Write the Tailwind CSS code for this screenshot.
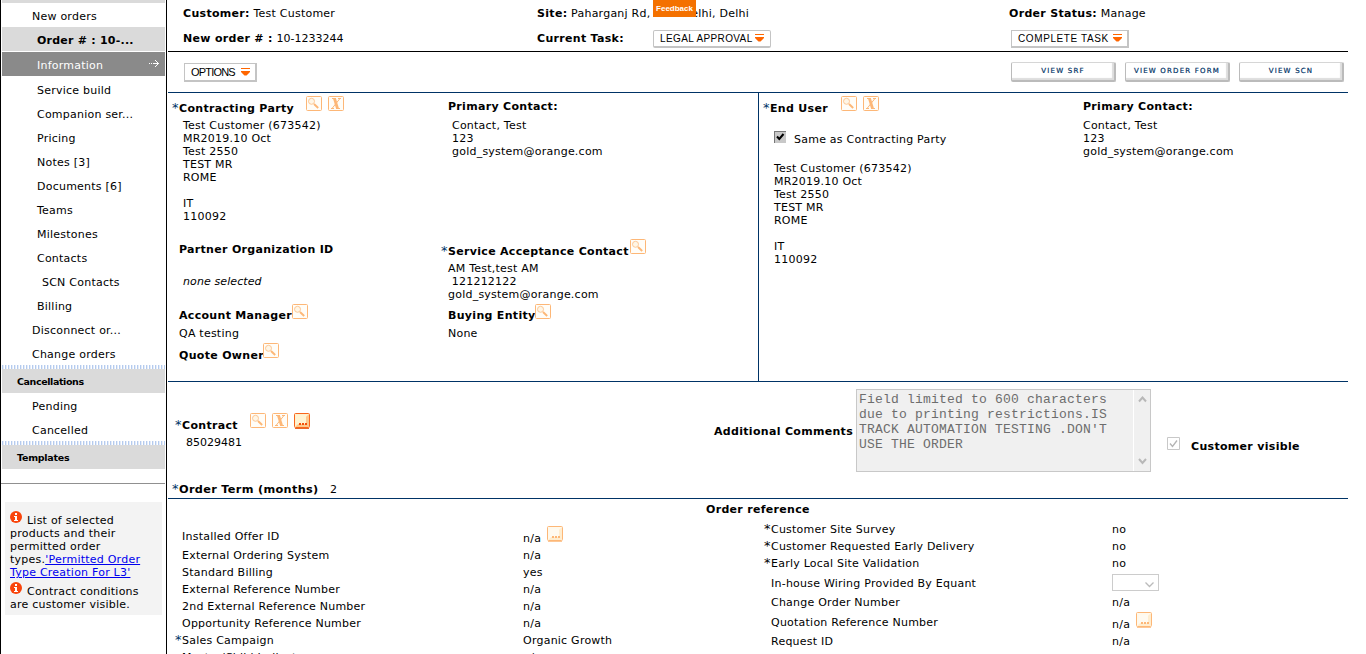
<!DOCTYPE html>
<html lang="en">
<head>
<meta charset="utf-8">
<title>Order information</title>
<script src="https://cdn.jsdelivr.net/npm/@tailwindcss/browser@4"></script>
</head>
<body class="h-[654px] w-[1366px] overflow-hidden bg-white font-['DejaVu_Sans',sans-serif] text-[11px] leading-[13px] tracking-[.23px] text-black [&_b]:whitespace-nowrap [&_b]:tracking-[.31px]">
<svg class="hidden">
  <symbol id="search" viewBox="0 0 16 15"><rect x=".5" y=".5" width="15" height="14" rx="1" fill="#fffdf8" stroke="#fdb777"/><circle cx="5.5" cy="5.3" r="3" fill="#fff6e6" stroke="#fdc896"/><path d="M8 8l4.2 4" stroke="#fdb777" stroke-width="1.9"/></symbol>
  <symbol id="clear" viewBox="0 0 16 15"><rect x=".5" y=".5" width="15" height="14" rx="1" fill="#fffdf8" stroke="#fdb777"/><path d="M4 2.500h4M10 2.500h3M3 12.500h3M8 12.500h4M12 2.500L4 12.500" stroke="#fdb777" fill="none"/><path d="M6.500 2.500L9.500 12.500" stroke="#fdb777" stroke-width="2.800"/></symbol>
  <symbol id="more" viewBox="0 0 16 16"><rect x=".5" y=".5" width="15" height="14" rx="1" fill="#fff9ec" stroke="#fdb777"/><path d="M15 1v13H1z" fill="#ffedcf"/><path d="M3 3h9v8H3z" fill="#fffaf0"/><path d="M1 15.500h14" stroke="#fdc896"/><path d="M5 10h2v2H5zM8 10h2v2H8zM11 10h2v2h-2z" fill="#fdb777"/></symbol>
  <symbol id="more-on" viewBox="0 0 16 16"><rect x=".5" y=".5" width="15" height="14" rx="1" fill="#fff0cc" stroke="#f9661b"/><path d="M15 1v13H1z" fill="#fdc98e"/><path d="M2 2h10v9H2z" fill="#fff3d2"/><path d="M1 15.500h14" stroke="#e8682a"/><path d="M5 10h2v2H5zM8 10h2v2H8zM11 10h2v2h-2z" fill="#f4500a"/></symbol>
  <symbol id="drop" viewBox="0 0 9 8"><path d="M0 0h9v1H0zM0 3h9v1L5.500 7.500h-2L0 4z" fill="#f60"/></symbol>
  <symbol id="info" viewBox="0 0 12 12"><circle cx="6" cy="6" r="6" fill="#f9440b"/><path d="M5 2h2v2H5zM4 5h3v4h1v1H4V9h1V6H4z" fill="#fff"/></symbol>
</svg>
<div class="flex h-full">
  <nav class="flex h-full w-[167px] shrink-0 flex-col border-x border-black pl-px">
    <div class="h-[3px] w-[163px] bg-[#dadada]"></div>
    <div class="h-6 pl-[30px] leading-[27px]">New orders</div>
    <div class="h-6 w-[163px] bg-[#dadada] pl-[35px] font-bold leading-[27px]">Order # : 10-...</div>
    <div class="mt-px flex h-6 w-[163px] items-center justify-between bg-[#8a8a8a] pl-[35px] pr-[6px] leading-6 text-white"><span class="pt-[3px]">Information</span>
      <svg width="10" height="9" class="mb-0.5" fill="#fff"><path d="M0 4h1v1H0zM2 4h1v1H2zM4 4h6v1H4zM8 3h1v3H8zM7 2h1v1H7zM7 6h1v1H7zM6 1h1v1H6zM6 7h1v1H6z"/></svg></div>
    <div class="mt-[3px] h-[288px] pl-[35px] leading-6">
      <p>Service build</p><p>Companion ser...</p><p>Pricing</p><p>Notes [3]</p><p>Documents [6]</p><p>Teams</p><p>Milestones</p><p>Contacts</p><p class="pl-[5px]">SCN Contacts</p><p>Billing</p><p class="-ml-[5px]">Disconnect or...</p><p class="-ml-[5px]">Change orders</p>
    </div>
    <div class="-mt-[2px] h-1 w-[163px] shrink-0 bg-[repeating-linear-gradient(90deg,#b5cbee_0_1px,#e4ecf9_1px_2px,#ffffff_2px_3px)]"></div>
    <div class="h-6 w-[163px] bg-[#dadada] pl-[15px] text-[9.5px] font-bold leading-[25px] tracking-[-0.4px]">Cancellations</div>
    <div class="h-12 pl-[30px] pt-[2px] leading-6"><p>Pending</p><p>Cancelled</p></div>
    <div class="h-1 w-[163px] shrink-0 bg-[repeating-linear-gradient(90deg,#b5cbee_0_1px,#e4ecf9_1px_2px,#ffffff_2px_3px)]"></div>
    <div class="h-6 w-[163px] bg-[#dadada] pl-[15px] text-[9.5px] font-bold leading-[25px] tracking-[-0.25px]">Templates</div>
    <div class="-ml-px mt-[14px] h-px w-[164px] bg-[#909090]"></div>
    <div class="ml-[3px] mt-[18px] h-[113px] w-[157px] whitespace-nowrap bg-[#f3f3f3] pl-[5px] pt-[9px]">
      <p class="flex h-[15px] items-start gap-[5px]"><svg class="h-3 w-3"><use href="#info"/></svg><span class="pt-[3px]">List of selected</span></p>
      <p class="pt-px">products and their<br>permitted order<br>types.<a class="text-[#0000ee] underline">'Permitted Order<br>Type Creation For L3'</a></p>
      <p class="mt-[3px] flex h-[15px] items-start gap-[5px]"><svg class="h-3 w-3"><use href="#info"/></svg><span class="pt-[3px]">Contract conditions</span></p>
      <p class="pt-px">are customer visible.</p>
    </div>
  </nav>
  <main class="ml-px w-[1180px] shrink-0">
    <header class="grid h-[52px] grid-cols-[354px_472px_1fr] grid-rows-[26px_25px] items-center border-b border-black pl-[15px]">
      <p><b>Customer:</b> Test Customer</p>
      <p class="relative"><b>Site:</b> Paharganj Rd, New Delhi, Delhi<span class="absolute -top-[7px] left-[116px] h-[17px] w-[43px] bg-[#f47100] text-center font-['Liberation_Sans',sans-serif] text-[8px] font-bold leading-[18px] tracking-normal text-white">Feedback</span></p>
      <p><b>Order Status:</b> Manage</p>
      <p><b>New order # :</b> <span class="tracking-normal">10-1233244</span></p>
      <p class="flex items-center"><b class="w-[116px]">Current Task:</b><button class="flex h-[18px] w-[118px] items-center justify-between rounded-[2px] border border-b-2 border-[#c4c4c4] pl-[6px] pr-[6px] font-['Liberation_Sans',sans-serif] text-[10px] tracking-[.38px]">LEGAL APPROVAL<svg class="-mt-px h-2 w-[9px]"><use href="#drop"/></svg></button></p>
      <button class="ml-[2px] flex h-[18px] w-[118px] items-center justify-between border border-b-2 border-r-2 border-[#c4c4c4] pl-[6px] pr-[5px] font-['Liberation_Sans',sans-serif] text-[10px] tracking-[.6px]">COMPLETE TASK<svg class="-mt-px h-2 w-[9px]"><use href="#drop"/></svg></button>
    </header>
    <div class="flex h-[41px] items-center border-b border-[#003366] pl-4">
      <button class="flex h-[19px] w-[73px] items-center justify-between border border-b-2 border-r-2 border-[#c4c4c4] pl-[6px] pr-[5px] font-['Liberation_Sans',sans-serif] text-[11px] tracking-[-0.8px]"><span class="pt-px">OPTIONS</span><svg class="h-2 w-[9px]"><use href="#drop"/></svg></button>
      <div class="ml-auto mr-1 flex gap-[9px] text-[7px] text-[#003366] [-webkit-text-stroke:.2px_#003366]">
        <button class="h-5 w-[105px] rounded-[2px] border border-b-2 border-r-2 border-[#bbb] border-t-[#d6d6d6] tracking-[1.2px] shadow-[inset_-2px_-2px_1px_#ddd]">VIEW SRF</button>
        <button class="h-5 w-[105px] rounded-[2px] border border-b-2 border-r-2 border-[#bbb] border-t-[#d6d6d6] tracking-[1.2px] shadow-[inset_-2px_-2px_1px_#ddd]">VIEW ORDER FORM</button>
        <button class="h-5 w-[105px] rounded-[2px] border border-b-2 border-r-2 border-[#bbb] border-t-[#d6d6d6] tracking-[1.2px] shadow-[inset_-2px_-2px_1px_#ddd]">VIEW SCN</button>
      </div>
    </div>
    <section class="flex h-[289px] border-b border-[#003366]">
      <div class="flex w-[591px] border-r border-[#003366]">
        <div class="w-[280px] pl-[11px]">
          <div class="-ml-[7px] flex h-[26px]"><span class="w-[7px] pt-[8px] text-[13px] text-[#003366]">*</span><b class="w-[127px] pt-[9px]">Contracting Party</b><svg class="mt-[3px] h-[15px] w-4"><use href="#search"/></svg><svg class="ml-[6px] mt-[3px] h-[15px] w-4"><use href="#clear"/></svg></div>
          <div class="h-[124px] pl-1">Test Customer (673542)<br>MR2019.10 Oct<br>Test 2550<br>TEST MR<br>ROME<br><br>IT<br>110092</div>
          <p class="h-[32px]"><b>Partner Organization ID</b></p>
          <p class="h-[29px] pl-1 italic tracking-[.1px]">none selected</p>
          <div class="flex h-[23px]"><b class="w-[113px] pt-[5px]">Account Manager</b><svg class="h-[15px] w-4"><use href="#search"/></svg></div>
          <p class="h-[16px]">QA testing</p>
          <div class="flex"><b class="w-[84px] pt-[6px]">Quote Owner</b><svg class="h-[15px] w-4"><use href="#search"/></svg></div>
        </div>
        <div class="pt-[7px]">
          <p class="h-[19px]"><b>Primary Contact:</b></p>
          <div class="h-[120px] pl-1">Contact, Test<br>123<br>gold_system@orange.com</div>
          <div class="-ml-[7px] flex h-[23px]"><span class="w-[7px] pt-[5px] text-[13px] text-[#003366]">*</span><b class="w-[182px] pt-[6px]">Service Acceptance Contact</b><svg class="h-[15px] w-4"><use href="#search"/></svg></div>
          <div class="h-[42px]">AM Test,test AM<br>&nbsp;121212122<br>gold_system@orange.com</div>
          <div class="flex h-[23px]"><b class="w-[87px] pt-[5px]">Buying Entity</b><svg class="h-[15px] w-4"><use href="#search"/></svg></div>
          <p>None</p>
        </div>
      </div>
      <div class="w-[324px] pl-[4px]">
        <div class="flex h-[40px]"><span class="w-[7px] pt-[8px] text-[13px] text-[#003366]">*</span><b class="w-[71px] pt-[9px]">End User</b><svg class="mt-[3px] h-[15px] w-4"><use href="#search"/></svg><svg class="ml-[6px] mt-[3px] h-[15px] w-4"><use href="#clear"/></svg></div>
        <div class="flex h-[29px] pl-[11px]"><svg width="12" height="12" class="mr-2 -mt-[2px]"><path d="M0 0h12v12H0z" fill="#c8c8c8"/><path d="M0 12V0h12v1H1v11z" fill="#777"/><path d="M3 5.500l2.300 2.500L9.500 3" stroke="#000" stroke-width="2" fill="none"/></svg><span>Same as Contracting Party</span></div>
        <div class="pl-[11px]">Test Customer (673542)<br>MR2019.10 Oct<br>Test 2550<br>TEST MR<br>ROME<br><br>IT<br>110092</div>
      </div>
      <div class="pt-[7px]"><p class="h-[19px]"><b>Primary Contact:</b></p>Contact, Test<br>123<br>gold_system@orange.com</div>
    </section>
    <section class="flex h-[117px] border-b border-[#003366]">
      <div class="w-[546px] pt-[31px]">
        <div class="ml-[7px] flex h-[23px]"><span class="w-[7px] pt-[5px] text-[13px] text-[#003366]">*</span><b class="w-[68px] pt-[6px]">Contract</b><svg class="h-[15px] w-4"><use href="#search"/></svg><svg class="ml-[6px] h-[15px] w-4"><use href="#clear"/></svg><svg class="ml-[6px] h-4 w-4"><use href="#more-on"/></svg></div>
        <p class="h-[47px] pl-[18px] tracking-normal">85029481</p>
        <p class="flex pl-1"><span class="-mt-px w-[7px] text-[13px] text-[#003366]">*</span><b class="w-[151px] text-[11.3px]">Order Term (months)</b>2</p>
      </div>
      <b class="w-[142px] pt-[43px]">Additional Comments</b>
      <div class="mt-[7px] flex h-[83px] w-[295px] border border-[#c8c8c8] bg-[#f0f0f0] font-['Liberation_Mono',monospace] text-[13px] leading-[15px] text-[#6d6d6d]">
        <p class="w-[276px] whitespace-nowrap pl-[2px] pt-[2px] tracking-[.2px]">Field limited to 600 characters<br>due to printing restrictions.IS<br>TRACK AUTOMATION TESTING .DON'T<br>USE THE ORDER</p>
        <div class="flex flex-1 flex-col items-center justify-between border-l border-white py-[6px]"><svg width="9" height="7" fill="none" stroke="#b8b8b8" stroke-width="2"><path d="M1 5.500l3.500-4 3.500 4"/></svg><svg width="9" height="7" fill="none" stroke="#b8b8b8" stroke-width="2"><path d="M1 1l3.500 4L8 1"/></svg></div>
      </div>
      <div class="ml-4 mt-[55px] flex"><svg width="13" height="13" fill="none" stroke="#c8c8c8"><path d="M.5.500h12v12H.5z"/><path d="M3 6.500l2.500 3 4.500-6" stroke="#b4b4b4" stroke-width="1.300"/></svg><b class="ml-[11px] pt-[3px]">Customer visible</b></div>
    </section>
    <section>
      <b class="block h-[24px] pl-[538px] pt-1">Order reference</b>
      <div class="flex">
        <div class="w-[341px] pl-[14px] leading-[17px]">
          <p class="h-[24px] pt-[5px]">Installed Offer ID</p><p>External Ordering System</p><p>Standard Billing</p><p>External Reference Number</p><p>2nd External Reference Number</p><p>Opportunity Reference Number</p><p class="-ml-[7px] flex h-[17px]"><span class="-mt-px w-[7px] text-[13px] text-[#003366]">*</span>Sales Campaign</p><p>Master/Child Indicator</p>
        </div>
        <div class="w-[255px] pl-[14px] leading-[17px]">
          <div class="flex h-[24px]"><span class="w-6 pt-[7px]">n/a</span><svg class="mt-[3px] h-4 w-4"><use href="#more"/></svg></div><p>n/a</p><p>yes</p><p>n/a</p><p>n/a</p><p>n/a</p><p>Organic Growth</p><p>n/a</p>
        </div>
        <div class="w-[348px] leading-[17px]">
          <p class="-mt-[2px] flex"><span class="-mt-px w-[7px] text-[13px]">*</span>Customer Site Survey</p><p class="flex"><span class="-mt-px w-[7px] text-[13px]">*</span>Customer Requested Early Delivery</p><p class="flex"><span class="-mt-px w-[7px] text-[13px]">*</span>Early Local Site Validation</p>
          <div class="pl-[7px]"><p class="pt-[3px]">In-house Wiring Provided By Equant</p><p class="pt-[2px]">Change Order Number</p><p class="pt-[3px]">Quotation Reference Number</p><p class="pt-[2px]">Request ID</p></div>
        </div>
        <div class="leading-[17px]">
          <p class="-mt-[2px]">no</p><p>no</p><p>no</p>
          <div class="mt-[2px] flex h-[17px] w-[47px] items-center justify-end border border-[#ccc] pr-1"><svg width="9" height="6" fill="none" stroke="#bbb" stroke-width="1.300" class="mt-1"><path d="M.5.500l4 4 4-4"/></svg></div>
          <p class="pt-[3px]">n/a</p>
          <div class="flex h-[22px]"><span class="w-6 pt-[5px]">n/a</span><svg class="mt-px h-4 w-4"><use href="#more"/></svg></div>
          <p>n/a</p><p>n/a</p>
        </div>
      </div>
    </section>
  </main>
</div>
</body>
</html>
